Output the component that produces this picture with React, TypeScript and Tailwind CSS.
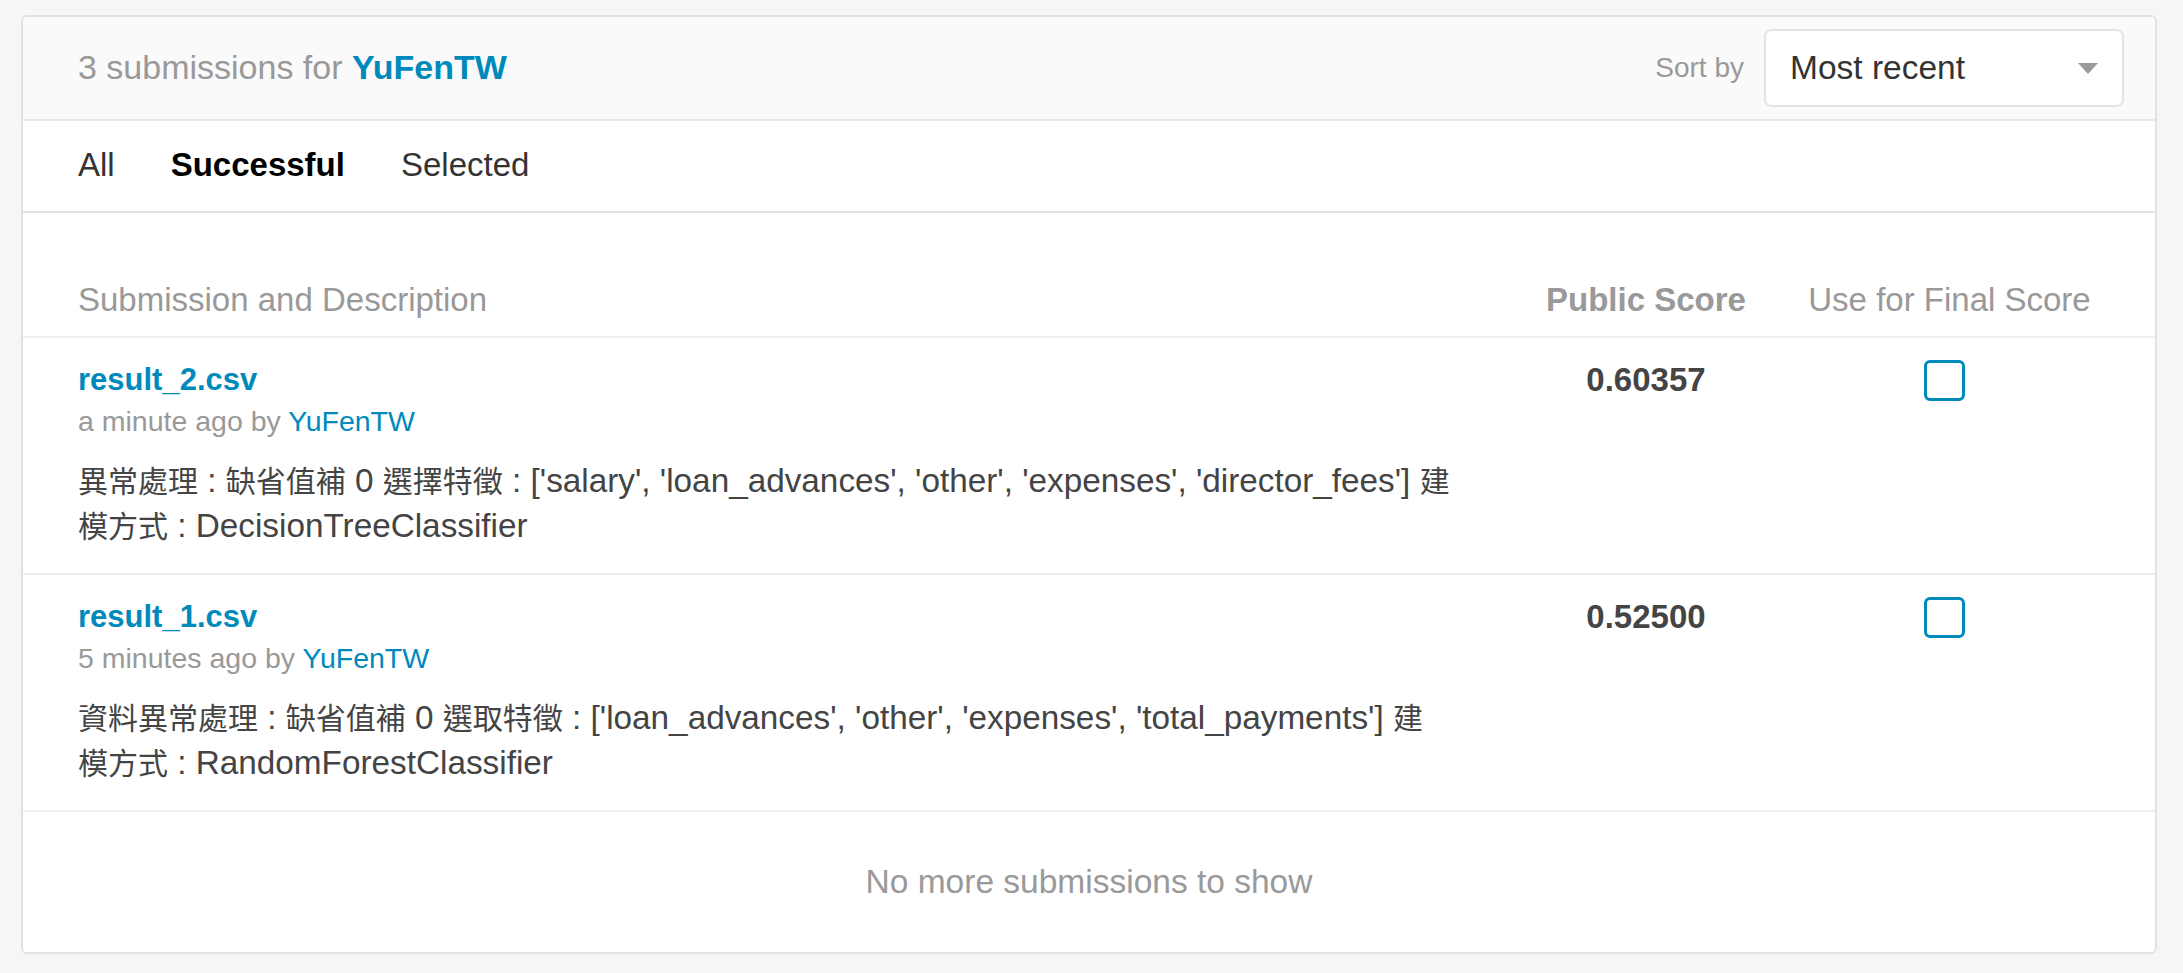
import React from 'react';

type Submission = {
  file: string;
  ago: string;
  user: string;
  desc: string[];
  score: string;
};

const SUBMISSIONS: Submission[] = [
  {
    file: 'result_2.csv',
    ago: 'a minute ago',
    user: 'YuFenTW',
    desc: [
      "異常處理 : 缺省值補 0 選擇特徵 : ['salary', 'loan_advances', 'other', 'expenses', 'director_fees'] 建",
      '模方式 : DecisionTreeClassifier',
    ],
    score: '0.60357',
  },
  {
    file: 'result_1.csv',
    ago: '5 minutes ago',
    user: 'YuFenTW',
    desc: [
      "資料異常處理 : 缺省值補 0 選取特徵 : ['loan_advances', 'other', 'expenses', 'total_payments'] 建",
      '模方式 : RandomForestClassifier',
    ],
    score: '0.52500',
  },
];

// CJK runs are set a bit smaller so they sit at the same width as in the page
function Desc({ text }: { text: string }) {
  const parts = text.split(/([\u3400-\u9fff]+)/);
  return (
    <>
      {parts.map((p, i) =>
        /[\u3400-\u9fff]/.test(p) ? (
          <span key={i} className="text-[30px]">
            {p}
          </span>
        ) : (
          <React.Fragment key={i}>{p}</React.Fragment>
        )
      )}
    </>
  );
}

function SubmissionRow({ s }: { s: Submission }) {
  return (
    <div className="grid grid-cols-[1fr_292px_283px] gap-x-4 pl-[55px] pr-[64px] pt-[22px] pb-[24px] border-b-2 border-[#eeeeee]">
      <div>
        <div className="text-[31px] leading-[40px] font-bold text-[#008abc]">{s.file}</div>
        <div className="mt-[3px] text-[28.5px] leading-[36px] text-[#999999]">
          {s.ago} by <span className="text-[#008abc]">{s.user}</span>
        </div>
        <div className="mt-[20px] text-[33.3px] leading-[44px] text-[#444444]">
          {s.desc.map((line, i) => (
            <div key={i} className="whitespace-nowrap">
              <Desc text={line} />
            </div>
          ))}
        </div>
      </div>
      <div className="text-center text-[33px] leading-[40px] font-bold text-[#444444]">{s.score}</div>
      <div className="flex justify-center">
        <div className="mr-[11px] w-[41px] h-[41px] rounded-[6px] border-[3px] border-[#008abc] bg-white" />
      </div>
    </div>
  );
}

export default function App() {
  return (
    <div className="min-h-screen bg-[#f4f6f7] pt-[15px] pl-[21px] pb-[19px] font-['Liberation_Sans','Noto_Sans_CJK_TC',sans-serif]">
      <div className="w-[2136px] bg-white border-2 border-[#e2e2e2] rounded-[6px] overflow-hidden">
        {/* header */}
        <div className="h-[104px] flex items-center justify-between pl-[55px] pr-[31px] bg-[#fafafa] border-b-2 border-[#e8e8e8]">
          <div className="-mt-[2px] text-[34px] text-[#999999]">
            3 submissions for <span className="font-bold text-[#008abc]">YuFenTW</span>
          </div>
          <div className="flex items-center gap-5">
            <span className="text-[28px] text-[#999999]">Sort by</span>
            <div className="w-[360px] h-[78px] flex items-center justify-between pl-[24px] pr-[24px] bg-white border-2 border-[#e4e4e4] rounded-[7px]">
              <span className="text-[33.5px] text-[#333333]">Most recent</span>
              <svg width="20" height="11" viewBox="0 0 20 11">
                <path d="M0 0 L20 0 L10 11 Z" fill="#999999" />
              </svg>
            </div>
          </div>
        </div>

        {/* tabs */}
        <div className="flex items-center gap-[56px] pl-[55px] pt-[24px] pb-[26px] text-[33px] leading-[40px] border-b-2 border-[#e3e3e3]">
          <span className="text-[#333333]">All</span>
          <span className="font-bold text-black">Successful</span>
          <span className="text-[#333333]">Selected</span>
        </div>

        {/* table head */}
        <div className="grid grid-cols-[1fr_292px_283px] gap-x-4 pl-[55px] pr-[64px] pt-[67px] pb-[16px] text-[33px] leading-[40px] text-[#999999] border-b-2 border-[#eeeeee]">
          <div>Submission and Description</div>
          <div className="text-center font-bold">Public Score</div>
          <div className="text-center whitespace-nowrap">Use for Final Score</div>
        </div>

        {SUBMISSIONS.map((s) => (
          <SubmissionRow key={s.file} s={s} />
        ))}

        <div className="h-[140px] flex items-center justify-center text-[33.5px] text-[#999999]">
          No more submissions to show
        </div>
      </div>
    </div>
  );
}
